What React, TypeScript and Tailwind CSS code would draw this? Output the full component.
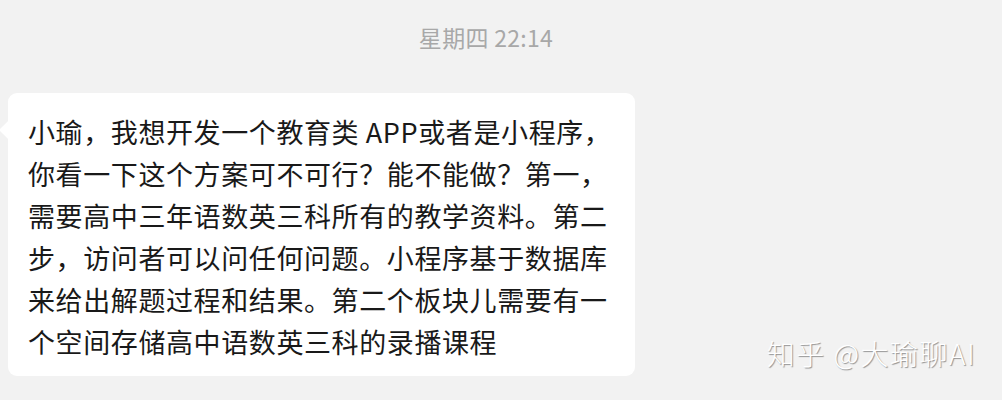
export default function App() {
  const lines = [
    '小瑜，我想开发一个教育类 APP或者是小程序，',
    '你看一下这个方案可不可行？能不能做？第一，',
    '需要高中三年语数英三科所有的教学资料。第二',
    '步，访问者可以问任何问题。小程序基于数据库',
    '来给出解题过程和结果。第二个板块儿需要有一',
    '个空间存储高中语数英三科的录播课程',
  ]

  return (
    <div
      className="relative h-[400px] w-[1002px] overflow-hidden bg-[#f2f2f2]"
      style={{ fontFamily: '"Noto Sans CJK SC", "Noto Sans", sans-serif' }}
    >
      {/* Timestamp */}
      <div className="flex h-[75px] items-center justify-center">
        <span className="mr-[30px] text-[23px] tracking-[0.3px] text-[#a8a8a8]">星期四 22:14</span>
      </div>

      {/* Message bubble */}
      <div className="pl-[8px] pt-[18px]">
        <div className="relative w-[627px] rounded-[9px] bg-white pb-[13px] pl-[20px] pr-[10px] pt-[18px]">
          <div className="absolute left-[-6px] top-[30px] h-[14px] w-[14px] rotate-45 rounded-[2px] bg-white" />
          <div className="text-[27px] leading-[42px] tracking-[0.6px] text-[#191919]">
            {lines.map((l, i) => (
              <div key={i} className="whitespace-nowrap">
                {l}
              </div>
            ))}
          </div>
        </div>
      </div>

      {/* Watermark */}
      <div
        className="absolute bottom-[26px] right-[26px] text-[28px] font-light tracking-[1.5px] text-white"
        style={{ textShadow: '1px 1px 1px rgba(0,0,0,0.4)' }}
      >
        知乎 @大瑜聊AI
      </div>
    </div>
  )
}
